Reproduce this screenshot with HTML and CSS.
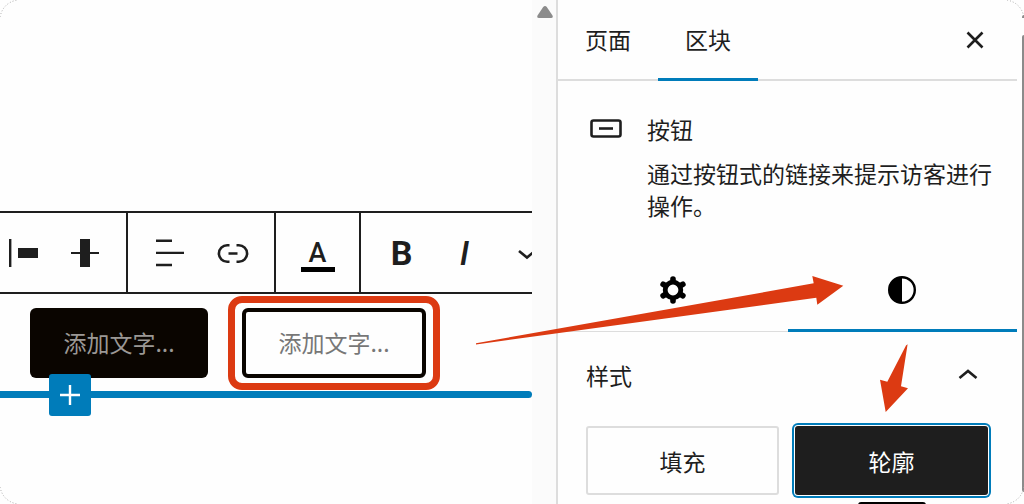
FILE: index.html
```html
<!DOCTYPE html>
<html lang="zh-CN">
<head>
    <meta charset="UTF-8">
    <title>按钮区块</title>
    <link rel="stylesheet" href="styles.css">
</head>
<body>
    <div class="screen">
        <!-- 编辑区 -->
        <main class="editor">
            <div class="toolbar">
                <div class="group group-first">
                    <button class="tool" aria-label="左对齐项目">
                        <svg width="42" height="42" viewBox="0 0 42 42"><path d="M8 7h2.400v28h-2.400zM17 16h20v10h-20z"/></svg>
                    </button>
                    <button class="tool" aria-label="居中对齐项目">
                        <svg width="42" height="42" viewBox="0 0 42 42"><path d="M16 7h10v28h-10zM7 20h28v2h-28z"/></svg>
                    </button>
                </div>
                <div class="group">
                    <button class="tool" aria-label="文本对齐">
                        <svg width="42" height="42" viewBox="0 0 42 42"><path d="M7 7.500h16v2.400h-16zM7 19.700h28v2.400h-28zM7 31.800h16v2.400h-16z"/></svg>
                    </button>
                    <button class="tool" aria-label="链接">
                        <svg class="line" width="42" height="42" viewBox="0 0 42 42"><path d="M17.500 13.200h-2.300a8.300 8.300 0 0 0 0 16.600h2.300M24.500 13.200h2.300a8.300 8.300 0 0 1 0 16.600h-2.300M16.500 21.500h9"/></svg>
                    </button>
                </div>
                <div class="group">
                    <button class="tool" aria-label="文字颜色"><span class="color-letter">A</span></button>
                </div>
                <div class="group group-last">
                    <button class="tool bold" aria-label="粗体">B</button>
                    <button class="tool italic" aria-label="斜体">I</button>
                    <button class="tool" aria-label="更多">
                        <svg class="line" width="42" height="42" viewBox="0 0 42 42"><path d="M12 19l8 6.500 8-6.500"/></svg>
                    </button>
                </div>
            </div>
            <div class="blocks">
                <button class="block-btn filled">添加文字...</button>
                <div class="marked">
                    <button class="block-btn outlined">添加文字...</button>
                </div>
            </div>
            <div class="inserter">
                <button class="add" aria-label="添加区块">
                    <svg width="20" height="20" viewBox="0 0 20 20"><path d="M8.800 0h2.400v20h-2.400zM0 8.800h20v2.400h-20z"/></svg>
                </button>
            </div>
        </main>

        <div class="scrollbar">
            <svg width="16" height="13" viewBox="0 0 16 13"><path d="M6.200 1q1.800-2 3.600 0l5.700 8.500q1 2.500-1.500 2.500h-12q-2.500 0-1.500-2.500z"/></svg>
        </div>

        <!-- 设置侧边栏 -->
        <aside class="sidebar">
            <div class="tabs">
                <button class="tab">页面</button>
                <button class="tab active">区块</button>
                <button class="close" aria-label="关闭">
                    <svg class="line" width="18" height="18" viewBox="0 0 18 18"><path d="M1.500 1.500l15 15M16.500 1.500l-15 15"/></svg>
                </button>
            </div>
            <section class="card">
                <svg class="line" width="32" height="32" viewBox="0 0 32 32"><rect x="1.500" y="7.500" width="29" height="16" rx="2"/><path d="M9 15.500h14"/></svg>
                <div class="card-text">
                    <h2>按钮</h2>
                    <p>通过按钮式的链接来提示访客进行操作。</p>
                </div>
            </section>
            <div class="subtabs">
                <button class="subtab" aria-label="设置">
                    <svg width="28" height="28" viewBox="0 0 28 28">
                        <circle cx="14" cy="14" r="7.800" fill="none" stroke="#000" stroke-width="4.800"/>
                        <path d="M14 5V3M14 23v2M6.200 9.500L4.100 8.300M21.800 18.500l2.100 1.200M6.200 18.500l-2.100 1.200M21.800 9.500l2.100-1.200" fill="none" stroke="#000" stroke-width="5.600" stroke-linecap="round"/>
                    </svg>
                </button>
                <button class="subtab active" aria-label="样式">
                    <svg width="28" height="28" viewBox="0 0 28 28"><circle cx="14" cy="14" r="12.800" fill="none" stroke="#000" stroke-width="2.400"/><path d="M14 1a13 13 0 0 0 0 26z"/></svg>
                </button>
            </div>
            <section class="panel">
                <button class="panel-title">样式
                    <svg class="line" width="20" height="12" viewBox="0 0 20 12"><path d="M1.500 9L10 2l8.500 7"/></svg>
                </button>
                <div class="styles">
                    <button class="style-btn">填充</button>
                    <button class="style-btn selected">轮廓</button>
                </div>
            </section>
            <div class="tooltip"></div>
        </aside>

        <div class="page-edge"><div class="thumb"></div></div>

        <!-- 标注箭头 -->
        <svg class="arrows" width="548" height="140" viewBox="476 275 548 140">
            <path d="M476 343.300L813.700 283.300L812.300 276L843.300 285.700L817.300 304.700L816.300 297.700L476 344.500z"/>
            <path d="M907.600 344.300L901 386.300L908 388.300L885.700 412L880 379.700L887.300 381.700L906 345.500z"/>
        </svg>

        <!-- 圆角虚线 -->
        <svg class="corner top-left" width="18" height="18" viewBox="0 0 18 18"><path d="M0 17Q3 3 17 0"/></svg>
        <svg class="corner top-right" width="18" height="18" viewBox="0 0 18 18"><path d="M1 0Q15 3 18 17"/><circle class="dot" cx="18" cy="17" r="2"/></svg>
        <svg class="corner bottom-left" width="18" height="18" viewBox="0 0 18 18"><path d="M0 1Q3 15 17 18"/></svg>
        <svg class="corner bottom-right" width="18" height="18" viewBox="0 0 18 18"><path d="M18 1Q15 15 1 18"/></svg>
    </div>
</body>
</html>
```
FILE: styles.css
```css
/* 全局 */
* {
    box-sizing: border-box;
}

body {
    margin: 0;
    font-family: "Noto Sans CJK SC", sans-serif;
    font-size: 23px;
    line-height: 32px;
    color: #1e1e1e;
    background-color: #fefefe;
}

button {
    padding: 0;
    border: none;
    background: none;
    font: inherit;
    color: inherit;
    cursor: pointer;
}

svg {
    display: block;
    flex: none;
    fill: currentColor;
}

.line {
    fill: none;
    stroke: currentColor;
    stroke-width: 2.6;
}

.screen {
    position: relative;
    display: flex;
    height: 100vh;
    overflow: hidden;
}

/* 编辑区 */
.editor {
    flex: 1;
    min-width: 0;
    padding-top: 211px;
}

.toolbar {
    display: flex;
    height: 83px;
    border-top: 2px solid #1e1e1e;
    border-bottom: 2px solid #1e1e1e;
    overflow: hidden;
}

.group {
    display: flex;
    flex: none;
    padding: 0 10px;
    border-right: 2px solid #1e1e1e;
}

.group-first {
    width: 128px;
    justify-content: flex-end;
}

.group-last {
    padding-left: 9px;
    border-right: none;
}

.tool {
    display: flex;
    flex: none;
    align-items: center;
    justify-content: center;
    width: 63px;
    font-family: Roboto, sans-serif;
}

.bold {
    font-size: 34px;
    font-weight: 700;
}

.italic {
    font-size: 34px;
    font-style: italic;
    font-weight: 500;
}

.color-letter {
    width: 34px;
    padding-top: 6px;
    border-bottom: 5px solid #000;
    font-size: 27px;
    font-weight: 500;
    line-height: 28px;
}

/* 按钮区块 */
.blocks {
    display: flex;
    gap: 34px;
    padding: 14px 30px 0;
}

.block-btn {
    width: 178px;
    height: 70px;
    padding-bottom: 2px;
    border-radius: 6px;
    white-space: nowrap;
}

.filled {
    background-color: #0a0500;
    color: #9b9895;
}

.outlined {
    width: 184px;
    border: 4px solid #0a0500;
    color: #777;
}

/* 红色标注框 */
.marked {
    position: relative;
}

.marked::after {
    content: "";
    position: absolute;
    inset: -12px -14px;
    border: 7px solid #dc3a12;
    border-radius: 14px;
    pointer-events: none;
}

.inserter {
    position: relative;
    height: 7px;
    margin-top: 13px;
    border-radius: 0 4px 4px 0;
    background-color: #007cba;
}

.add {
    position: absolute;
    top: -17px;
    left: 49px;
    display: flex;
    align-items: center;
    justify-content: center;
    width: 42px;
    height: 42px;
    border-radius: 3px;
    background-color: #007cba;
    color: #fff;
}

/* 滚动条 */
.scrollbar {
    width: 24px;
    padding: 6px 5px;
    background-color: #fbfbfb;
    color: #8b8b8b;
}

/* 侧边栏 */
.sidebar {
    position: relative;
    width: 461px;
    border-left: 2px solid #ddd;
}

.tabs {
    display: flex;
    height: 81px;
    border-bottom: 2px solid #ddd;
}

.tab {
    width: 100px;
    height: 81px;
    border-bottom: 3px solid transparent;
}

.active {
    border-bottom-color: #007cba;
}

.close {
    margin-left: auto;
    padding: 0 33px;
}

.card {
    display: flex;
    gap: 25px;
    padding: 32px 24px 29px 32px;
}

.card h2,
.card p {
    margin: 0;
    font-size: 23px;
    font-weight: 400;
}

.card h2 {
    margin-bottom: 12px;
}

.subtabs {
    display: flex;
    height: 82px;
    box-shadow: inset 0 -1px #ddd;
}

.subtab {
    display: flex;
    flex: 1;
    align-items: center;
    justify-content: center;
    border-bottom: 3px solid transparent;
    color: #000;
}

.subtab.active {
    border-bottom-color: #007cba;
}

.panel {
    padding: 0 29px 0 28px;
}

.panel-title {
    display: flex;
    align-items: center;
    justify-content: space-between;
    width: 100%;
    height: 86px;
    padding-right: 10px;
}

.styles {
    display: grid;
    grid-template-columns: 1fr 1fr;
    gap: 16px;
    margin-top: 8px;
}

.style-btn {
    height: 69px;
    border: 2px solid #ddd;
    border-radius: 3px;
}

.selected {
    border: none;
    background-color: #1e1e1e;
    color: #fff;
    box-shadow: 0 0 0 1px #fff, 0 0 0 3px #007cba;
}

.tooltip {
    position: absolute;
    top: 502px;
    right: 91px;
    width: 68px;
    height: 20px;
    border-radius: 3px;
    background-color: #000;
}

/* 页面右侧滚动条 */
.page-edge {
    width: 7px;
    padding: 35px 0 12px 5px;
}

.thumb {
    height: 100%;
    border-radius: 2px 0 0 2px;
    background-color: #8b8b8b;
}

/* 标注箭头 */
.arrows {
    position: absolute;
    top: 275px;
    right: 0;
    color: #dc3a12;
    pointer-events: none;
}

/* 四角 */
.corner {
    position: absolute;
    fill: none;
    stroke: #aaa;
    stroke-dasharray: 1 2;
    pointer-events: none;
}

.dot {
    fill: #8b8b8b;
    stroke: none;
}

.top-left {
    top: 0;
    left: 0;
}

.top-right {
    top: 0;
    right: 0;
}

.bottom-left {
    bottom: 0;
    left: 0;
}

.bottom-right {
    bottom: 0;
    right: 0;
}
```
